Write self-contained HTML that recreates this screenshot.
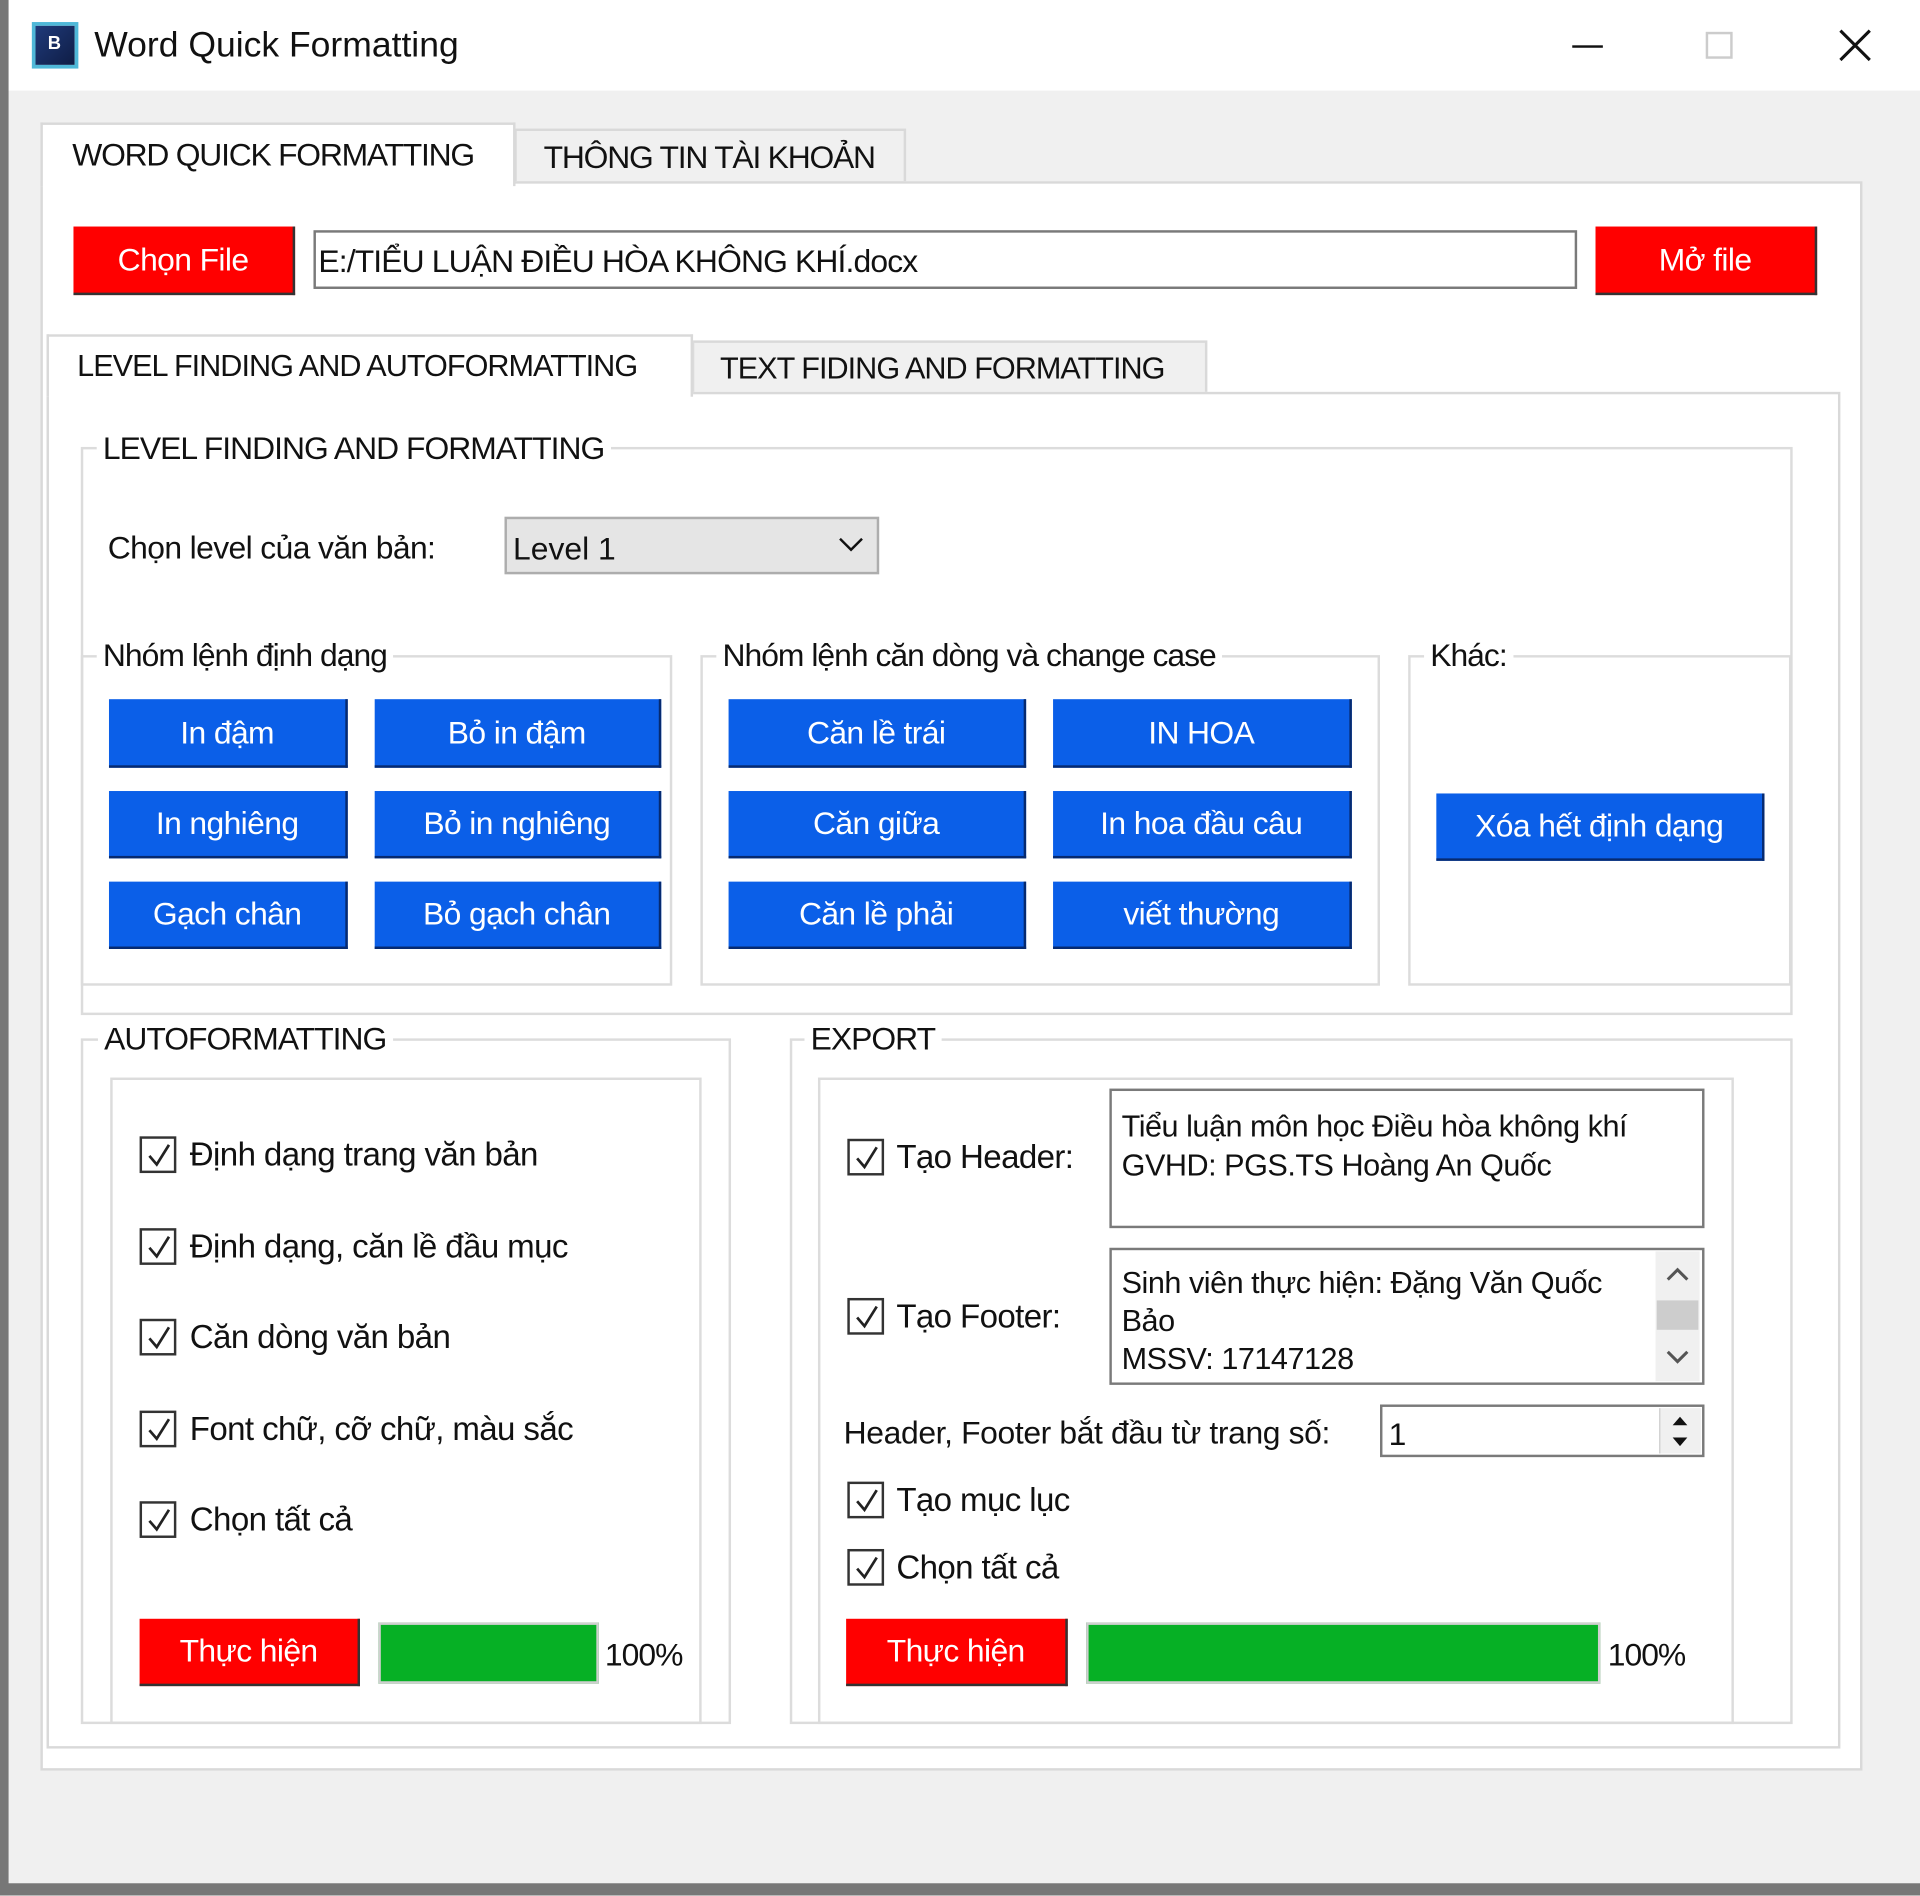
<!DOCTYPE html>
<html><head><meta charset="utf-8"><style>
*{margin:0;padding:0;box-sizing:border-box}
html,body{width:1920px;height:1896px;overflow:hidden;background:#fff}
#w{position:absolute;left:0;top:0;width:1568px;height:1548px;transform:scale(1.22449);transform-origin:0 0;font-family:"Liberation Sans","DejaVu Sans",sans-serif;color:#111;background:#f0f0f0}
.a{position:absolute}
.t{position:absolute;white-space:nowrap;line-height:1}
.btn{position:absolute;color:#fff;font-size:26px;display:flex;align-items:center;justify-content:center;border-right:2px solid #333;border-bottom:2px solid #333;white-space:nowrap;letter-spacing:-0.5px}
.red{background:#ff0000}
.blue{background:#0b5fe8;border-right:2px solid #062a70;border-bottom:2px solid #062a70}
.grp{position:absolute;border:2px solid #dcdcdc}
.lbl{position:absolute;background:#fff;padding:0 5px;font-size:26px;line-height:1;white-space:nowrap;letter-spacing:-0.8px}
.cb{position:absolute;width:30px;height:30px;border:2px solid #333;background:#fff}
.cb svg{position:absolute;left:2px;top:2px}
.ct{position:absolute;font-size:27px;white-space:nowrap;line-height:1;letter-spacing:-0.5px}
</style></head><body><div id="w">
<div class="a" style="left:0;top:0;width:1568px;height:74px;background:#fff"></div>
<div class="a" style="left:0;top:0;width:7px;height:1548px;background:#777"></div>
<div class="a" style="left:0;top:1538px;width:1568px;height:10px;background:#777"></div>
<div class="a" style="left:26px;top:18px;width:38px;height:38px;background:linear-gradient(135deg,#1f3a7a,#0f1d45);border:3px solid #4fb8d8"></div>
<div class="t" style="left:39px;top:28px;color:#fff;font-size:15px;font-weight:bold">B</div>
<div class="t" style="left:77px;top:23px;font-size:29px">Word Quick Formatting</div>
<div class="a" style="left:1284px;top:37px;width:25px;height:2px;background:#111"></div>
<div class="a" style="left:1393px;top:26px;width:22px;height:22px;border:2px solid #ccc"></div>
<svg class="a" style="left:1500px;top:22px" width="30" height="30"><path d="M3 3L27 27M27 3L3 27" stroke="#111" stroke-width="2.5"/></svg>

<div class="a" style="left:420px;top:105px;width:320px;height:45px;background:#f0f0f0;border:2px solid #d9d9d9"></div>
<div class="t" style="left:444px;top:115px;font-size:26px;letter-spacing:-1px">THÔNG TIN TÀI KHOẢN</div>
<div class="a" style="left:33px;top:148px;width:1488px;height:1298px;background:#fff;border:2px solid #d9d9d9"></div>
<div class="a" style="left:33px;top:100px;width:388px;height:52px;background:#fff;border:2px solid #d9d9d9;border-bottom:none"></div>
<div class="t" style="left:59px;top:113px;font-size:26px;letter-spacing:-1px">WORD QUICK FORMATTING</div>

<div class="btn red" style="left:60px;top:185px;width:181px;height:56px">Chọn File</div>
<div class="a" style="left:256px;top:188px;width:1032px;height:48px;border:2px solid #7a7a7a;background:#fff"></div>
<div class="t" style="left:260px;top:200px;font-size:26px;letter-spacing:-0.7px">E:/TIỂU LUẬN ĐIỀU HÒA KHÔNG KHÍ.docx</div>
<div class="btn red" style="left:1303px;top:185px;width:181px;height:56px">Mở file</div>

<div class="a" style="left:565px;top:278px;width:421px;height:45px;background:#f0f0f0;border:2px solid #d9d9d9"></div>
<div class="t" style="left:588px;top:289px;font-size:25px;letter-spacing:-0.8px">TEXT FIDING AND FORMATTING</div>
<div class="a" style="left:38px;top:320px;width:1465px;height:1108px;background:#fff;border:2px solid #d9d9d9"></div>
<div class="a" style="left:38px;top:273px;width:528px;height:51px;background:#fff;border:2px solid #d9d9d9;border-bottom:none"></div>
<div class="t" style="left:63px;top:287px;font-size:25px;letter-spacing:-0.8px">LEVEL FINDING AND AUTOFORMATTING</div>

<div class="grp" style="left:66px;top:365px;width:1398px;height:464px"></div>
<div class="lbl" style="left:79px;top:353px">LEVEL FINDING AND FORMATTING</div>
<div class="t" style="left:88px;top:434px;font-size:26px;letter-spacing:-0.5px">Chọn level của văn bản:</div>
<div class="a" style="left:412px;top:422px;width:306px;height:47px;background:#e5e5e5;border:2px solid #adadad"></div>
<div class="t" style="left:419px;top:435px;font-size:26px">Level 1</div>
<svg class="a" style="left:684px;top:438px" width="22" height="14"><path d="M2 2L11 11L20 2" stroke="#111" stroke-width="2" fill="none"/></svg>

<div class="grp" style="left:66px;top:535px;width:483px;height:270px"></div>
<div class="lbl" style="left:79px;top:522px">Nhóm lệnh định dạng</div>
<div class="btn blue" style="left:89px;top:571px;width:195px;height:56px">In đậm</div>
<div class="btn blue" style="left:306px;top:571px;width:234px;height:56px">Bỏ in đậm</div>
<div class="btn blue" style="left:89px;top:646px;width:195px;height:55px">In nghiêng</div>
<div class="btn blue" style="left:306px;top:646px;width:234px;height:55px">Bỏ in nghiêng</div>
<div class="btn blue" style="left:89px;top:720px;width:195px;height:55px">Gạch chân</div>
<div class="btn blue" style="left:306px;top:720px;width:234px;height:55px">Bỏ gạch chân</div>

<div class="grp" style="left:572px;top:535px;width:555px;height:270px"></div>
<div class="lbl" style="left:585px;top:522px">Nhóm lệnh căn dòng và change case</div>
<div class="btn blue" style="left:595px;top:571px;width:243px;height:56px">Căn lề trái</div>
<div class="btn blue" style="left:860px;top:571px;width:244px;height:56px">IN HOA</div>
<div class="btn blue" style="left:595px;top:646px;width:243px;height:55px">Căn giữa</div>
<div class="btn blue" style="left:860px;top:646px;width:244px;height:55px">In hoa đầu câu</div>
<div class="btn blue" style="left:595px;top:720px;width:243px;height:55px">Căn lề phải</div>
<div class="btn blue" style="left:860px;top:720px;width:244px;height:55px">viết thường</div>

<div class="grp" style="left:1150px;top:535px;width:313px;height:270px"></div>
<div class="lbl" style="left:1163px;top:522px">Khác:</div>
<div class="btn blue" style="left:1173px;top:648px;width:268px;height:55px">Xóa hết định dạng</div>

<div class="grp" style="left:66px;top:848px;width:531px;height:560px"></div>
<div class="lbl" style="left:80px;top:835px">AUTOFORMATTING</div>
<div class="grp" style="left:90px;top:880px;width:483px;height:528px"></div>

<div class="cb" style="left:114px;top:928px"><svg width="24" height="24"><path d="M4 12L10 19L20 3" stroke="#222" stroke-width="2.2" fill="none"/></svg></div>
<div class="ct" style="left:155px;top:930px">Định dạng trang văn bản</div>
<div class="cb" style="left:114px;top:1003px"><svg width="24" height="24"><path d="M4 12L10 19L20 3" stroke="#222" stroke-width="2.2" fill="none"/></svg></div>
<div class="ct" style="left:155px;top:1005px">Định dạng, căn lề đầu mục</div>
<div class="cb" style="left:114px;top:1077px"><svg width="24" height="24"><path d="M4 12L10 19L20 3" stroke="#222" stroke-width="2.2" fill="none"/></svg></div>
<div class="ct" style="left:155px;top:1079px">Căn dòng văn bản</div>
<div class="cb" style="left:114px;top:1152px"><svg width="24" height="24"><path d="M4 12L10 19L20 3" stroke="#222" stroke-width="2.2" fill="none"/></svg></div>
<div class="ct" style="left:155px;top:1154px">Font chữ, cỡ chữ, màu sắc</div>
<div class="cb" style="left:114px;top:1226px"><svg width="24" height="24"><path d="M4 12L10 19L20 3" stroke="#222" stroke-width="2.2" fill="none"/></svg></div>
<div class="ct" style="left:155px;top:1228px">Chọn tất cả</div>

<div class="btn red" style="left:114px;top:1322px;width:180px;height:55px">Thực hiện</div>
<div class="a" style="left:309px;top:1325px;width:180px;height:50px;background:#06b025;border:2px solid #d0d0d0"></div>
<div class="t" style="left:494px;top:1338px;font-size:26px;letter-spacing:-0.8px">100%</div>

<div class="grp" style="left:645px;top:848px;width:819px;height:560px"></div>
<div class="lbl" style="left:657px;top:835px">EXPORT</div>
<div class="grp" style="left:668px;top:880px;width:748px;height:528px"></div>

<div class="cb" style="left:692px;top:930px"><svg width="24" height="24"><path d="M4 12L10 19L20 3" stroke="#222" stroke-width="2.2" fill="none"/></svg></div>
<div class="ct" style="left:732px;top:932px">Tạo Header:</div>
<div class="a" style="left:906px;top:889px;width:486px;height:114px;border:2px solid #7a7a7a;background:#fff"></div>
<div class="t" style="left:916px;top:904px;font-size:25px;letter-spacing:-0.4px;line-height:32px">Tiểu luận môn học Điều hòa không khí<br>GVHD: PGS.TS Hoàng An Quốc</div>

<div class="cb" style="left:692px;top:1060px"><svg width="24" height="24"><path d="M4 12L10 19L20 3" stroke="#222" stroke-width="2.2" fill="none"/></svg></div>
<div class="ct" style="left:732px;top:1062px">Tạo Footer:</div>
<div class="a" style="left:906px;top:1019px;width:486px;height:112px;border:2px solid #7a7a7a;background:#fff"></div>
<div class="t" style="left:916px;top:1033px;font-size:25px;letter-spacing:-0.4px;line-height:31px">Sinh viên thực hiện: Đặng Văn Quốc<br>Bảo<br>MSSV: 17147128</div>
<div class="a" style="left:1352px;top:1022px;width:36px;height:106px;background:#f0f0f0"></div>
<div class="a" style="left:1353px;top:1062px;width:34px;height:24px;background:#cdcdcd"></div>
<svg class="a" style="left:1359px;top:1033px" width="22" height="16"><path d="M3 12L11 4L19 12" stroke="#555" stroke-width="2.5" fill="none"/></svg>
<svg class="a" style="left:1359px;top:1100px" width="22" height="16"><path d="M3 4L11 12L19 4" stroke="#555" stroke-width="2.5" fill="none"/></svg>

<div class="ct" style="left:689px;top:1157px;font-size:26px;letter-spacing:-0.3px">Header, Footer bắt đầu từ trang số:</div>
<div class="a" style="left:1127px;top:1147px;width:265px;height:43px;border:2px solid #7a7a7a;background:#fff"></div>
<div class="t" style="left:1134px;top:1158px;font-size:26px">1</div>
<div class="a" style="left:1355px;top:1150px;width:34px;height:37px;background:#f0f0f0;border-left:1px solid #ccc"></div>
<svg class="a" style="left:1362px;top:1152px" width="20" height="34"><path d="M4 12L10 5L16 12Z M4 22L10 29L16 22Z" fill="#111"/></svg>

<div class="cb" style="left:692px;top:1210px"><svg width="24" height="24"><path d="M4 12L10 19L20 3" stroke="#222" stroke-width="2.2" fill="none"/></svg></div>
<div class="ct" style="left:732px;top:1212px">Tạo mục lục</div>
<div class="cb" style="left:692px;top:1265px"><svg width="24" height="24"><path d="M4 12L10 19L20 3" stroke="#222" stroke-width="2.2" fill="none"/></svg></div>
<div class="ct" style="left:732px;top:1267px">Chọn tất cả</div>

<div class="btn red" style="left:691px;top:1322px;width:181px;height:55px">Thực hiện</div>
<div class="a" style="left:887px;top:1325px;width:420px;height:50px;background:#06b025;border:2px solid #d0d0d0"></div>
<div class="t" style="left:1313px;top:1338px;font-size:26px;letter-spacing:-0.8px">100%</div>
</div></body></html>
